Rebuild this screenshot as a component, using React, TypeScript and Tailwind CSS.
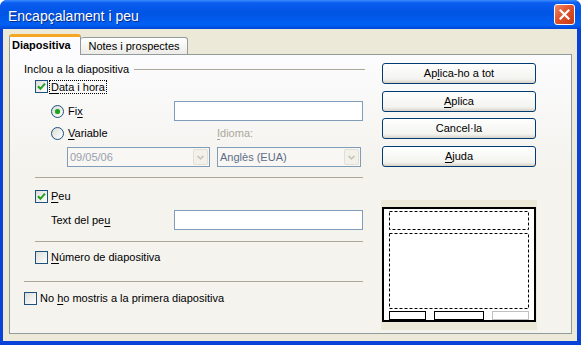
import React from "react";

function U({ children }: { children: React.ReactNode }) {
  return <span className="underline underline-offset-[2px]">{children}</span>;
}

function Check({ checked }: { checked?: boolean }) {
  return (
    <span className="w-[13px] h-[13px] shrink-0 border border-[#1C5180] bg-[linear-gradient(135deg,#DCDCD7,#FFFFFF)] flex items-center justify-center">
      {checked && (
        <svg width="9" height="9" viewBox="0 0 9 9">
          <path d="M1 4.2 L3.4 6.8 L8 1.6" stroke="#21A121" strokeWidth="2" fill="none" />
        </svg>
      )}
    </span>
  );
}

function Radio({ on }: { on?: boolean }) {
  return (
    <span className="w-[13px] h-[13px] shrink-0 rounded-full border border-[#1C5180] bg-[linear-gradient(135deg,#DCDCD7,#FFFFFF)] flex items-center justify-center">
      {on && <span className="w-[5px] h-[5px] rounded-full bg-[#21A121] shadow-[0_0_1px_#6FD36F]" />}
    </span>
  );
}

function Combo({ value, width, textColor }: { value: string; width: string; textColor: string }) {
  return (
    <div className={`${width} h-[20px] border border-[#7F9DB9] bg-[#F8F7F3] flex items-center justify-between pl-[2px] pr-[1px]`}>
      <span className={textColor}>{value}</span>
      <span className="w-[15px] h-[16px] rounded-[2px] border border-[#E2E0D5] bg-[#F2F1EA] flex items-center justify-center">
        <svg width="7" height="5" viewBox="0 0 7 5">
          <path d="M0.5 0.8 L3.5 3.8 L6.5 0.8" stroke="#C9C7BA" strokeWidth="1.6" fill="none" />
        </svg>
      </span>
    </div>
  );
}

function Button({ children, className = "" }: { children: React.ReactNode; className?: string }) {
  return (
    <div
      className={`h-[21px] w-[154px] ml-px rounded-[3px] border border-[#003C74] bg-[linear-gradient(#FFFFFF,#F3F3EF_80%,#D8D2C6)] flex items-center justify-center ${className}`}
    >
      {children}
    </div>
  );
}

function Separator({ className = "" }: { className?: string }) {
  return <div className={`h-px bg-[#ACA899] mr-[2px] ${className}`} />;
}

function SlidePreview() {
  return (
    <div className="mt-[33px] w-[156px] h-[130px] bg-[#ECE9D8] pt-[7px] pl-px">
      <svg width="154" height="115" viewBox="0 0 154 115">
        <rect x="1" y="1" width="152" height="113" fill="#FFFFFF" stroke="#000000" strokeWidth="2" />
        <rect x="7.5" y="4.5" width="139" height="18" fill="none" stroke="#000000" strokeDasharray="3 2" />
        <rect x="7.5" y="26.5" width="139" height="75" fill="none" stroke="#000000" strokeDasharray="3 2" />
        <rect x="7.5" y="104.5" width="36" height="8" fill="none" stroke="#000000" />
        <rect x="52.5" y="104.5" width="49" height="8" fill="none" stroke="#000000" />
        <rect x="110.5" y="104.5" width="36" height="8" fill="none" stroke="#C0C0C0" />
      </svg>
    </div>
  );
}

export default function App() {
  return (
    <div className="w-[583px] h-[347px] bg-white font-['Liberation_Sans',Arial,sans-serif] text-[11px] text-black leading-[13px]">
      <div className="w-[581px] h-[345px] rounded-t-[7px] bg-[#0842D8] flex flex-col overflow-hidden">
        {/* title bar */}
        <div className="h-[29px] shrink-0 flex items-center justify-between pl-[8px] pr-[6px] bg-[linear-gradient(180deg,#3C8CFF_0%,#0A5DF0_10%,#0054E3_45%,#0060F4_85%,#0046D5_100%)]">
          <span className="pt-[3px] text-white text-[14px] leading-none [text-shadow:1px_1px_0_#0A2A8A]">
            Encapçalament i peu
          </span>
          <div className="w-[21px] h-[21px] rounded-[3px] border border-white bg-[linear-gradient(135deg,#F08A66,#E0532B_45%,#C43A14)] flex items-center justify-center">
            <svg width="11" height="11" viewBox="0 0 11 11">
              <path d="M1.5 1.5 L9.5 9.5 M9.5 1.5 L1.5 9.5" stroke="#FFFFFF" strokeWidth="2.2" strokeLinecap="square" />
            </svg>
          </div>
        </div>

        {/* body */}
        <div className="flex-1 ml-[3px] mr-[4px] mb-[4px] bg-[#ECE9D8] pt-[6px] pl-[6px] pr-[5px] pb-[7px] flex flex-col">
          {/* tabs */}
          <div className="h-[20px] flex items-end relative z-10 -mb-px">
            <div className="w-[72px] h-[21px] rounded-t-[3px] border border-b-0 border-[#919B9C] border-t-[3px] border-t-[#F5A623] bg-[#FCFCFE] pl-[2px] pt-[2px] font-bold">
              Diapositiva
            </div>
            <div className="w-[107px] h-[18px] rounded-t-[3px] border border-l-0 border-[#919B9C] bg-[linear-gradient(#FFFFFF,#ECEBE6)] flex items-center justify-center">
              Notes i prospectes
            </div>
          </div>

          {/* panel */}
          <div className="flex-1 border border-[#919B9C] bg-[linear-gradient(#FCFCFE,#F4F3EE_40%)] flex">
            {/* left column */}
            <div className="w-[355px] flex flex-col">
              <div className="mt-[8px] h-[13px] flex items-center ml-[14px]">
                <span>Inclou a la diapositiva</span>
                <span className="flex-1 h-px bg-[#ACA899] ml-[5px]" />
              </div>

              <div className="mt-[4px] h-[13px] flex items-center ml-[25px]">
                <Check checked />
                <span className="ml-px px-px border border-dotted border-black leading-[12px]">
                  <U>D</U>ata i hora
                </span>
              </div>

              <div className="mt-[8px] h-[20px] flex items-center">
                <div className="ml-[41px] flex items-center">
                  <Radio on />
                  <span className="ml-[4px]">
                    Fi<U>x</U>
                  </span>
                </div>
                <div className="ml-auto mr-[2px] w-[189px] h-[20px] border border-[#7F9DB9] bg-white" />
              </div>

              <div className="mt-[6px] h-[13px] flex items-center">
                <div className="w-[207px] pl-[41px] flex items-center">
                  <Radio />
                  <span className="ml-[4px]">
                    <U>V</U>ariable
                  </span>
                </div>
                <span className="text-[#ACA899]">
                  <U>I</U>dioma:
                </span>
              </div>

              <div className="mt-[7px] flex items-center">
                <div className="ml-[57px]">
                  <Combo value="09/05/06" width="w-[143px]" textColor="text-[#97A0B0]" />
                </div>
                <div className="ml-[7px]">
                  <Combo value="Anglès (EUA)" width="w-[144px]" textColor="text-[#5E6C88]" />
                </div>
              </div>

              <Separator className="mt-[10px] ml-[25px]" />

              <div className="mt-[12px] h-[13px] flex items-center ml-[25px]">
                <Check checked />
                <span className="ml-[3px]">
                  <U>P</U>eu
                </span>
              </div>

              <div className="mt-[7px] h-[20px] flex items-center">
                <span className="ml-[41px]">
                  Text del pe<U>u</U>
                </span>
                <div className="ml-auto mr-[2px] w-[189px] h-[20px] border border-[#7F9DB9] bg-white" />
              </div>

              <Separator className="mt-[11px] ml-[25px]" />

              <div className="mt-[9px] h-[13px] flex items-center ml-[25px]">
                <Check />
                <span className="ml-[3px]">
                  <U>N</U>úmero de diapositiva
                </span>
              </div>

              <Separator className="mt-[17px] ml-[14px]" />

              <div className="mt-[10px] h-[13px] flex items-center ml-[14px]">
                <Check />
                <span className="ml-[3px]">
                  No <U>h</U>o mostris a la primera diapositiva
                </span>
              </div>
            </div>

            {/* right column */}
            <div className="ml-[16px] pt-[8px] flex flex-col">
              <Button>
                Ap<U>l</U>ica-ho a tot
              </Button>
              <Button className="mt-[7px]">
                <U>A</U>plica
              </Button>
              <Button className="mt-[6px]">Cancel·la</Button>
              <Button className="mt-[7px]">
                <U>A</U>juda
              </Button>
              <SlidePreview />
            </div>
          </div>
        </div>
      </div>
    </div>
  );
}
